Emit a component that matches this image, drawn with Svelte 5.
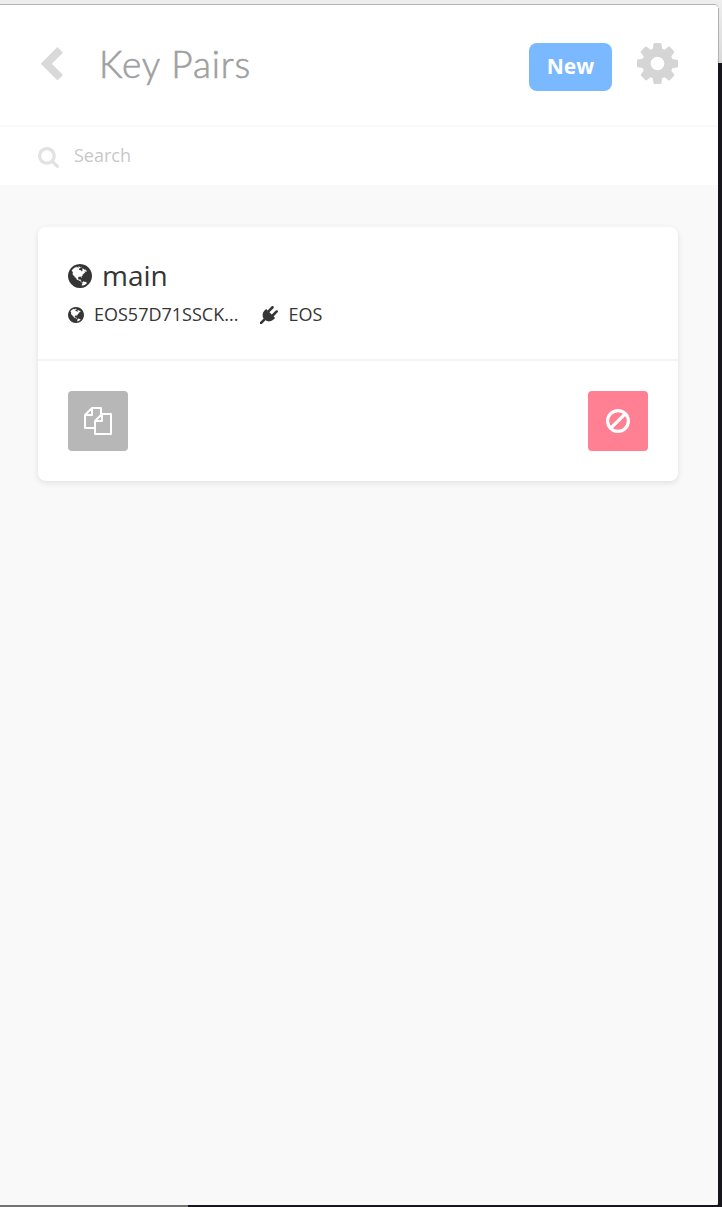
<script>
  const globe = "M896 128q209 0 385.5 103t279.5 279.5 103 385.5-103 385.5-279.5 279.5-385.5 103-385.5-103-279.5-279.5-103-385.5 103-385.5 279.5-279.5 385.5-103zm274 521q-2 1-9.5 9.5t-13.5 9.5q2 0 4.5-5t5-11 3.5-7q6-7 22-15 14-6 52-12 34-8 51 11-2-2 9.5-13t14.5-12q3-2 15-4.5t15-7.5l2-22q-12 1-17.5-7t-6.5-21q0 2-6 8 0-7-4.5-8t-11.5 1-9 1q-10-3-15-7.5t-8-16.5-4-15q-2-5-9.5-11t-9.5-10q-1-2-2.5-5.5t-3-6.5-4-5.5-5.5-2.5-7 5-7.5 10-4.5 5q-3-2-6-1.5t-4.5 1-4.5 3-5 3.5q-3 2-8.5 3t-8.5 2q15-5-1-11-10-4-16-3 9-4 7.5-12t-8.5-14h5q-1-4-8.5-8.5t-17.5-8.5-13-6q-8-5-34-9.5t-33-.5q-5 6-4.5 10.5t4 14 3.5 12.5q1 6-5.5 13t-6.5 12q0 7 14 15.5t10 21.5q-3 8-16 16t-16 12q-5 8-1.5 18.5t10.5 16.5q2 2 1.5 4t-3.5 4.5-5.5 4-6.5 3.5l-3 2q-11 5-20.5-6t-13.5-26q-7-25-16-30-23-8-29 1-5-13-41-26-25-9-58-4 6-1 0-15-7-15-19-12 3-6 4-17.5t1-13.5q3-13 12-23 1-1 7-8.5t9.5-13.5.5-6q35 4 50-11 5-5 11.5-17t10.5-17q9-6 14-5.5t14.5 5.5 14.5 5q14 1 15.5-11t-7.5-20q12 1 3-17-4-7-8-9-12-4-27 5-8 4 2 8-1-1-9.5 10.5t-16.5 17.5-16-5q-1-1-5.5-13.5t-9.5-13.5q-8 0-16 15 3-8-11-15t-24-8q19-12-8-27-7-4-20.5-5t-19.5 4q-5 7-5.5 11.5t5 8 10.5 5.5 11.5 4 8.5 3q14 10 8 14-2 1-8.5 3.5t-11.5 4.5-6 4q-3 4 0 14t-2 14q-5-5-9-17.5t-7-16.5q7 9-25 6l-10-1q-4 0-16 2t-20.5 1-13.5-8q-4-8 0-20 1-4 4-2-4-3-11-9.5t-10-8.5q-46 15-94 41 6 1 12-1 5-2 13-6.5t10-5.5q34-14 42-7l5-5q14 16 20 25-7-4-30-1-20 6-22 12 7 12 5 18-4-3-11.5-10t-14.5-11-15-5q-16 0-22 1-146 80-235 222 7 7 12 8 4 1 5 9t2.5 11 11.5-3q9 8 3 19 1-1 44 27 19 17 21 21 3 11-10 18-1-2-9-9t-9-4q-3 5 .5 18.5t10.5 12.5q-7 0-9.5 16t-2.5 35.5-1 23.5l2 1q-3 12 5.5 34.5t21.5 19.5q-13 3 20 43 6 8 8 9 3 2 12 7.5t15 10 10 10.5q4 5 10 22.5t14 23.5q-2 6 9.5 20t10.5 23q-1 0-2.5 1t-2.5 1q3 7 15.5 14t15.5 13q1 3 2 10t3 11 8 2q2-20-24-62-15-25-17-29-3-5-5.5-15.5t-4.5-14.5q2 0 6 1.5t8.5 3.5 7.5 4 2 3q-3 7 2 17.5t12 18.5 17 19 12 13q6 6 14 19.5t0 13.5q9 0 20 10.5t17 19.5q5 8 8 26t5 24q2 7 8.5 13.5t12.5 9.5l16 8 13 7q5 2 18.5 10.5t21.5 11.5q10 4 16 4t14.5-2.5 13.5-3.5q15-2 29 15t21 21q36 19 55 11-2 1 .5 7.5t8 15.5 9 14.5 5.5 8.5q5 6 18 15t18 15q6-4 7-9-3 8 7 20t18 10q14-3 14-32-31 15-49-18 0-1-2.5-5.5t-4-8.5-2.5-8.5 0-7.5 5-3q9 0 10-3.5t-2-12.5-4-13q-1-8-11-20t-12-15q-5 9-16 8t-16-9q0 1-1.5 5.5t-1.5 6.5q-13 0-15-1 1-3 2.5-17.5t3.5-22.5q1-4 5.5-12t7.5-14.5 4-12.5-4.5-9.5-17.5-2.5q-19 1-26 20-1 3-3 10.5t-5 11.5-9 7q-7 3-24 2t-24-5q-13-8-22.5-29t-9.5-37q0-10 2.5-26.5t3-25-5.5-24.5q3-2 9-9.5t10-10.5q2-1 4.5-1.5t4.5 0 4-1.5 3-6q-1-1-4-3-3-3-4-3 7 3 28.5-1.5t27.5 1.5q15 11 22-2 0-1-2.5-9.5t-.5-13.5q5 27 29 9 3 3 15.5 5t17.5 5q3 2 7 5.5t5.5 4.5 5-.5 8.5-6.5q10 14 12 24 11 40 19 44 7 3 11 2t4.5-9.5 0-14-1.5-12.5l-1-8v-18l-1-8q-15-3-18.5-12t1.5-18.5 15-18.5q1-1 8-3.5t15.5-6.5 12.5-8q21-19 15-35 7 0 11-9-1 0-5-3t-7.5-5-4.5-2q9-5 2-16 5-3 7.5-11t7.5-10q9 12 21 2 8-8 1-16 5-7 20.5-10.5t18.5-9.5q7 2 8-2t1-12 3-12q4-5 15-9t13-5l17-11q3-4 0-4 18 2 31-11 10-11-6-20 3-6-3-9.5t-15-5.5q3-1 11.5-.5t10.5-1.5q15-10-7-16-17-5-43 12zm-163 877q206-36 351-189-3-3-12.5-4.5t-12.5-3.5q-18-7-24-8 1-7-2.5-13t-8-9-12.5-8-11-7q-2-2-7-6t-7-5.5-7.5-4.5-8.5-2-10 1l-3 1q-3 1-5.5 2.5t-5.5 3-4 3 0 2.5q-21-17-36-22-5-1-11-5.5t-10.5-7-10-1.5-11.5 7q-5 5-6 15t-2 13q-7-5 0-17.5t2-18.5q-3-6-10.5-4.5t-12 4.5-11.5 8.5-9 6.5-8.5 5.5-8.5 7.5q-3 4-6 12t-5 11q-2-4-11.5-6.5t-9.5-5.5q2 10 4 35t5 38q7 31-12 48-27 25-29 40-4 22 12 26 0 7-8 20.5t-7 21.5q0 6 2 16z";
  const keyPairs = [{ name: 'main', key: 'EOS57D71SSCK...', chain: 'EOS' }];
</script>

<div class="desktop">
  <main class="window">
    <header>
      <svg class="back" viewBox="0 0 22 34" aria-hidden="true"><path d="M17 .6 21.3 4.9Q22 5.6 21.3 6.3L10.8 16.8 21.3 27.3Q22 28 21.3 28.7L17.2 32.8Q16.5 33.5 15.8 32.8L.5 17.5Q-.2 16.8.5 16.1L15.9.6Q16.5 0 17 .6Z" /></svg>
      <h1>Key Pairs</h1>
      <button class="new">New</button>
      <svg class="cog" viewBox="128 128 1536 1536" aria-hidden="true"><path d="M1152 896q0-106-75-181t-181-75-181 75-75 181 75 181 181 75 181-75 75-181zm512-109v222q0 12-8 23t-20 13l-185 28q-19 54-39 91 35 50 107 138 10 12 10 25t-9 23q-27 37-99 108t-94 71q-12 0-26-9l-138-108q-44 23-91 38-16 136-29 186-7 28-36 28h-222q-14 0-24.5-8.5t-11.5-21.5l-28-184q-49-16-90-37l-141 107q-10 9-25 9-14 0-25-11-126-114-165-168-7-10-7-23 0-12 8-23 15-21 51-66.5t54-70.5q-27-50-41-99l-183-27q-13-2-21-12.5t-8-23.5v-222q0-12 8-23t19-13l186-28q14-46 39-92-40-57-107-138-10-12-10-24 0-10 9-23 26-36 98.5-107.5t94.5-71.5q13 0 26 10l138 107q44-23 91-38 16-136 29-186 7-28 36-28h222q14 0 24.5 8.5t11.5 21.5l28 184q49 16 90 37l142-107q9-9 24-9 13 0 25 10 129 119 165 170 7 8 7 22 0 12-8 23-15 21-51 66.5t-54 70.5q26 50 41 98l183 28q13 2 21 12.5t8 23.5z" /></svg>
    </header>

    <div class="search">
      <svg viewBox="64 128 1664 1664" aria-hidden="true"><path d="M1216 832q0-185-131.5-316.5t-316.5-131.5-316.5 131.5-131.5 316.5 131.5 316.5 316.5 131.5 316.5-131.5 131.5-316.5zm512 832q0 52-38 90t-90 38q-54 0-90-38l-343-342q-179 124-399 124-143 0-273.5-55.5t-225-150-150-225-55.5-273.5 55.5-273.5 150-225 225-150 273.5-55.5 273.5 55.5 225 150 150 225 55.5 273.5q0 220-124 399l343 343q37 37 37 90z" /></svg>
      <input type="text" placeholder="Search" />
    </div>

    <section class="list">
      {#each keyPairs as pair}
        <article class="card">
          <div class="info">
            <h2><svg class="globe-lg" viewBox="128 128 1536 1536" aria-hidden="true"><path d={globe} /></svg>{pair.name}</h2>
            <div class="meta">
              <svg class="globe-sm" viewBox="128 128 1536 1536" aria-hidden="true"><path d={globe} /></svg>
              <span class="key">{pair.key}</span>
              <svg class="plug" viewBox="0 0 1792 1792" aria-hidden="true"><path d="M1755 453q37 38 37 90.5t-37 90.5l-401 400 150 150-160 160q-163 163-389.5 186.5t-411.5-100.5l-362 362h-181v-181l362-362q-124-185-100.5-411.5t186.5-389.5l160-160 150 150 400-401q38-37 91-37t90 37 37 90.5-37 90.5l-400 401 234 234 401-400q38-37 91-37t90 37z" /></svg>
              <span>{pair.chain}</span>
            </div>
          </div>
          <div class="actions">
            <button class="square copy" aria-label="Copy">
              <svg width="28" height="28" viewBox="0 0 28 28"><path d="M10 21H1V8l7-7h9v6M8 1v7H1M18 7h9v20H11V14zM18 7v7h-7" /></svg>
            </button>
            <button class="square remove" aria-label="Remove">
              <svg width="24" height="24" viewBox="0 0 24 24"><circle cx="12" cy="12" r="10.4" /><path d="M4.8 19.2 19.2 4.8" /></svg>
            </button>
          </div>
        </article>
      {/each}
    </section>
  </main>
</div>

<style>
  :global(body) { margin: 0; }
  * { box-sizing: border-box; }
  .desktop {
    height: 1207px;
    padding: 5px 4px 2px 0;
    overflow: hidden;
    background:
      linear-gradient(#737373, #737373) 0 100% / 188px 2px no-repeat,
      linear-gradient(#b0b0b0, #b0b0b0) 718px 8px / 1px 55px no-repeat,
      linear-gradient(#efeeef, #d9d9d9) 0 0 / 100% 63px no-repeat,
      #15151b;
    font-family: "Open Sans", sans-serif;
  }
  .window {
    height: 1200px;
    display: flex;
    flex-direction: column;
    overflow: hidden;
    border-radius: 0 4px 3px 0;
    background: #f9f9f9;
    box-shadow: 0 0 0 1px #b5b5b5;
    clip-path: inset(-1px 0 0 0);
  }
  header {
    height: 122px;
    flex: none;
    display: flex;
    align-items: flex-start;
    padding: 38px 40px 0 41px;
    background: #fff;
    border-bottom: 2px solid #f9f9f9;
  }
  .back { width: 22px; height: 34px; margin-top: 4px; fill: #d9d9d9; }
  h1 {
    flex: 1;
    margin: -1px 0 0 36px;
    font: 300 37px/44px Lato, sans-serif;
    color: #a0a0a0;
    letter-spacing: 0.9px;
    -webkit-text-stroke: 0.6px #a0a0a0;
  }
  button { border: 0; padding: 0; }
  .new {
    width: 83px;
    height: 48px;
    padding-bottom: 2px;
    border-radius: 8px;
    background: #7ab8ff;
    color: #fff;
    font: 700 21px/46px "Open Sans", sans-serif;
  }
  .cog { width: 41px; height: 41px; margin-left: 25px; fill: #d5d5d5; }
  .search {
    height: 58px;
    flex: none;
    display: flex;
    align-items: center;
    padding: 0 0 2px 38px;
    background: #fff;
  }
  .search svg { width: 21px; height: 21px; fill: #e2e2e2; margin-top: 4px; }
  input {
    width: 500px;
    margin-left: 15px;
    padding: 0;
    border: 0;
    outline: 0;
    background: none;
    font: 400 18px/26px "Open Sans", sans-serif;
  }
  input::placeholder { color: #c8c8c8; opacity: 1; }
  .list { padding: 42px 40px 0 38px; }
  .card {
    border-radius: 8px;
    background: #fff;
    box-shadow: 0 2px 6px rgba(0, 0, 0, 0.1);
    color: #353535;
  }
  .info { height: 134px; padding: 29px 30px 0; border-bottom: 2px solid #f4f4f4; }
  h2 { display: flex; align-items: center; margin: 0; font-size: 28px; font-weight: 400; line-height: 38px; }
  .card svg { flex: none; fill: #353535; }
  .globe-lg { width: 24px; height: 24px; margin: 2px 10px 0 0; }
  .meta { display: flex; align-items: center; height: 24px; margin-top: 8px; font-size: 18px; line-height: 24px; }
  .globe-sm { width: 16px; height: 16px; margin: 1px 10px 0 0; }
  .plug { width: 18px; height: 18px; margin: 1px 10px 0 22px; }
  .actions { display: flex; justify-content: space-between; padding: 30px; }
  .square { display: grid; place-items: center; width: 60px; height: 60px; border-radius: 4px; }
  .copy { background: #b7b7b7; }
  .remove { background: #ff8093; }
  .card .square svg { fill: none; stroke: #fff; stroke-width: 2; stroke-linejoin: round; }
  .card .remove svg { stroke-width: 3.2; }
</style>
